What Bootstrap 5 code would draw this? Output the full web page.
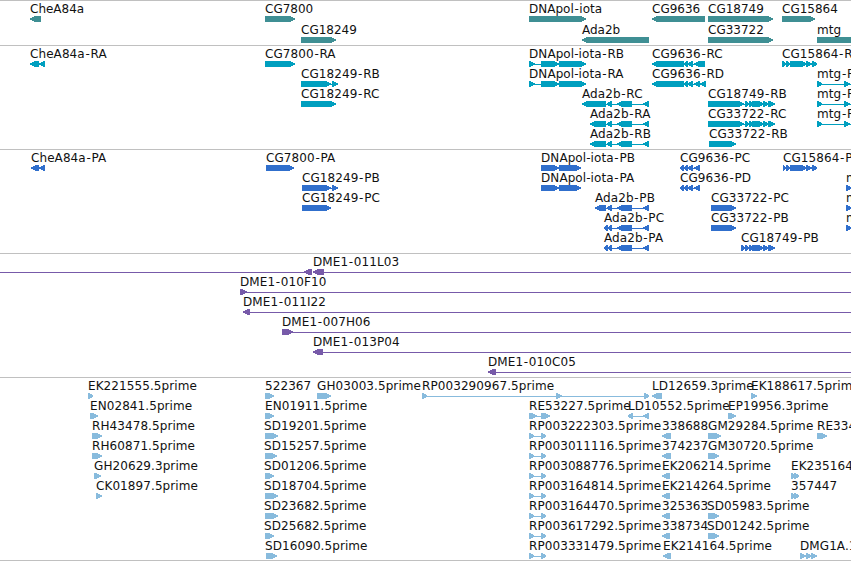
<!DOCTYPE html>
<html lang="en">
<head>
    <meta charset="UTF-8">
    <meta name="viewport" content="width=device-width, initial-scale=1.0">
    <title>Genome Browser</title>
    <link rel="stylesheet" href="https://cdn.jsdelivr.net/npm/bootstrap@5.3.0/dist/css/bootstrap.min.css">
    <style>
        body { font-family: "DejaVu Sans", sans-serif; font-size: 12px; }
        .browser { width: 851px; height: 561px; border-bottom: 1px solid #c0c0c0; }
        .track { border-top: 1px solid #c0c0c0; }
        .lane { height: 20px; width: 851px; overflow: visible; }
        .lane text { fill: #111; letter-spacing: .08px; }
        .track-gene { height: 45px; color: #3f8f94; }
        .track-gene .lane { height: 21px; }
        .track-gene text { letter-spacing: 0; }
        .track-transcript { height: 104px; color: #009fbf; }
        .track-protein { height: 104px; color: #306fcc; }
        .track-bac { height: 124px; color: #775aa9; }
        .track-est { height: 183px; color: #88bbdd; }
    </style>
</head>
<body class="bg-white overflow-hidden">
    <main id="browser" class="browser d-flex flex-column overflow-hidden"></main>

    <script>
        // feature: [label, strand, [start, end, start, end, ...]]
        const iotaR = [529, 535, 541, 559, 559, 586];
        const adaR = [607, 612, 617, 632, 643, 649];
        const cg18749R = [708, 744, 745, 749, 749, 753, 752, 764, 763, 769, 768, 775];
        const cg18749P = [741, 745, 745, 749, 749, 753, 752, 764, 763, 769, 768, 775];
        const cg9636P = [680, 684, 684, 688, 688, 693, 694, 700];
        const mtgR = [817, 822, 844, 850, 870, 880];
        const rp = [529, 534, 541, 546];

        const tracks = [
            { name: "gene", lanes: [
                [["CheA84a", "-", [30, 41]], ["CG7800", "+", [265, 295]], ["DNApol-iota", "+", [529, 586]],
                 ["CG9636", "-", [652, 705]], ["CG18749", "+", [708, 773]], ["CG15864", "+", [782, 815]]],
                [["CG18249", "+", [301, 336]], ["Ada2b", "-", [582, 649]], ["CG33722", "+", [708, 773]], ["mtg", "+", [817, 900]]]
            ] },
            { name: "transcript", lanes: [
                [["CheA84a-RA", "-", [30, 39, 39, 45]], ["CG7800-RA", "+", [265, 295]], ["DNApol-iota-RB", "+", iotaR],
                 ["CG9636-RC", "-", [652, 684, 684, 688, 688, 693, 694, 705]],
                 ["CG15864-RA", "+", [782, 786, 786, 790, 790, 807, 806, 812, 812, 817]]],
                [["CG18249-RB", "+", [301, 331, 332, 338]], ["DNApol-iota-RA", "+", iotaR],
                 ["CG9636-RD", "-", [652, 684, 684, 688, 688, 693, 694, 700, 700, 706]], ["mtg-RA", "+", mtgR]],
                [["CG18249-RC", "+", [301, 336]], ["Ada2b-RC", "-", [582, 606, ...adaR]], ["CG18749-RB", "+", cg18749R], ["mtg-RB", "+", mtgR]],
                [["Ada2b-RA", "-", [590, 606, ...adaR]], ["CG33722-RC", "+", cg18749R], ["mtg-RC", "+", mtgR]],
                [["Ada2b-RB", "-", [590, 606, ...adaR]], ["CG33722-RB", "+", [709, 736]]]
            ] },
            { name: "protein", lanes: [
                [["CheA84a-PA", "-", [31, 39, 39, 45]], ["CG7800-PA", "+", [266, 294]], ["DNApol-iota-PB", "+", [541, 559, 559, 581]],
                 ["CG9636-PC", "-", cg9636P], ["CG15864-PA", "+", [783, 786, 786, 790, 790, 807, 806, 812, 812, 817]]],
                [["CG18249-PB", "+", [302, 331, 332, 338]], ["DNApol-iota-PA", "+", [541, 559, 559, 581]],
                 ["CG9636-PD", "-", cg9636P], ["mtg-PA", "+", [846, 852]]],
                [["CG18249-PC", "+", [302, 331]], ["Ada2b-PB", "-", [595, 606, ...adaR]], ["CG33722-PC", "+", [711, 736]], ["mtg-PB", "+", [846, 852]]],
                [["Ada2b-PC", "-", [604, 608, 608, 612, 617, 632, 643, 649]], ["CG33722-PB", "+", [711, 736]], ["mtg-PC", "+", [846, 852]]],
                [["Ada2b-PA", "-", [604, 608, 608, 612, 617, 632, 643, 649]], ["CG18749-PB", "+", cg18749P]]
            ] },
            { name: "bac", lanes: [
                [["DME1-011L03", "-", [313, 324, 900, 910]], ["", "-", [-20, -10, 304, 312]]],
                [["DME1-010F10", "+", [240, 247, 900, 910]]],
                [["DME1-011I22", "-", [243, 250, 900, 910]]],
                [["DME1-007H06", "+", [282, 293, 900, 910]]],
                [["DME1-013P04", "-", [313, 323, 900, 910]]],
                [["DME1-010C05", "-", [488, 496, 900, 910]]]
            ] },
            { name: "est", lanes: [
                [["EK221555.5prime", "+", [88, 93]], ["522367", "+", [265, 274]], ["GH03003.5prime", "+", [317, 331]],
                 ["RP003290967.5prime", "+", [422, 427, 556, 562, 644, 649]], ["LD12659.3prime", "-", [652, 662]], ["EK188617.5prime", "+", [751, 757]]],
                [["EN02841.5prime", "+", [90, 98]], ["EN01911.5prime", "+", [265, 274]], ["RE53227.5prime", "+", [529, 537, 541, 550]],
                 ["LD10552.5prime", "-", [628, 633, 643, 649]], ["EP19956.3prime", "+", [728, 736]]],
                [["RH43478.5prime", "+", [92, 102]], ["SD19201.5prime", "+", [265, 278]], ["RP003222303.5prime", "+", rp],
                 ["338688", "-", [662, 671]], ["GM29284.5prime", "+", [708, 721]], ["RE33452.5prime", "+", [817, 827]]],
                [["RH60871.5prime", "+", [92, 102]], ["SD15257.5prime", "+", [265, 277]], ["RP003011116.5prime", "+", rp],
                 ["374237", "-", [662, 671]], ["GM30720.5prime", "+", [708, 719]]],
                [["GH20629.3prime", "+", [94, 101]], ["SD01206.5prime", "+", [265, 274]], ["RP003088776.5prime", "+", rp],
                 ["EK206214.5prime", "-", [662, 670]], ["EK235164.5prime", "+", [791, 795, 794, 799]]],
                [["CK01897.5prime", "+", [96, 102]], ["SD18704.5prime", "+", [265, 278]], ["RP003164814.5prime", "+", rp],
                 ["EK214264.5prime", "-", [662, 670]], ["357447", "+", [791, 795, 794, 799]]],
                [["SD23682.5prime", "+", [265, 278]], ["RP003164470.5prime", "+", rp], ["325363", "-", [662, 670]], ["SD05983.5prime", "+", [708, 719]]],
                [["SD25682.5prime", "+", [265, 274]], ["RP003617292.5prime", "+", rp], ["338734", "-", [662, 670]], ["SD01242.5prime", "+", [708, 719]]],
                [["SD16090.5prime", "+", [266, 277]], ["RP003331479.5prime", "+", rp], ["EK214164.5prime", "-", [663, 671]],
                 ["DMG1A.1", "+", [800, 806, 806, 811, 811, 817]]]
            ] }
        ];

        // exon box that ends in a point on the strand's side
        function exon(a, b, strand) {
            const tip = Math.min(5, b - a - 1);
            const points = strand === "+"
                ? `${a},15 ${b - tip},15 ${b},17.3 ${b},18.7 ${b - tip},21 ${a},21`
                : `${b},15 ${a + tip},15 ${a},17.3 ${a},18.7 ${a + tip},21 ${b},21`;
            return `<polygon points="${points}"/>`;
        }

        function feature([label, strand, exons]) {
            const start = exons[0];
            const end = exons[exons.length - 1];
            let svg = "";
            if (exons.length > 2) svg += `<rect x="${start}" y="18" width="${end - start}" height="1"/>`;
            for (let i = 0; i < exons.length; i += 2) svg += exon(exons[i], exons[i + 1], strand);
            // S sits flush with the box below
            const x = /^S/.test(label) ? start - 1 : start;
            // a little air on both sides of the last hyphen
            const text = label.replace(/-([^-]+)$/, '<tspan dx=".7">-</tspan><tspan dx=".6">$1</tspan>');
            if (label) svg += `<text x="${x}" y="12">${text}</text>`;
            return svg;
        }

        document.getElementById("browser").innerHTML = tracks.map(track => `
            <section class="track track-${track.name} flex-shrink-0">
                ${track.lanes.map(lane => `<svg class="lane d-block" fill="currentColor" shape-rendering="crispEdges">${lane.map(feature).join("")}</svg>`).join("")}
            </section>
        `).join("");
    </script>
    <script src="https://cdn.jsdelivr.net/npm/bootstrap@5.3.0/dist/js/bootstrap.bundle.min.js"></script>
</body>
</html>
